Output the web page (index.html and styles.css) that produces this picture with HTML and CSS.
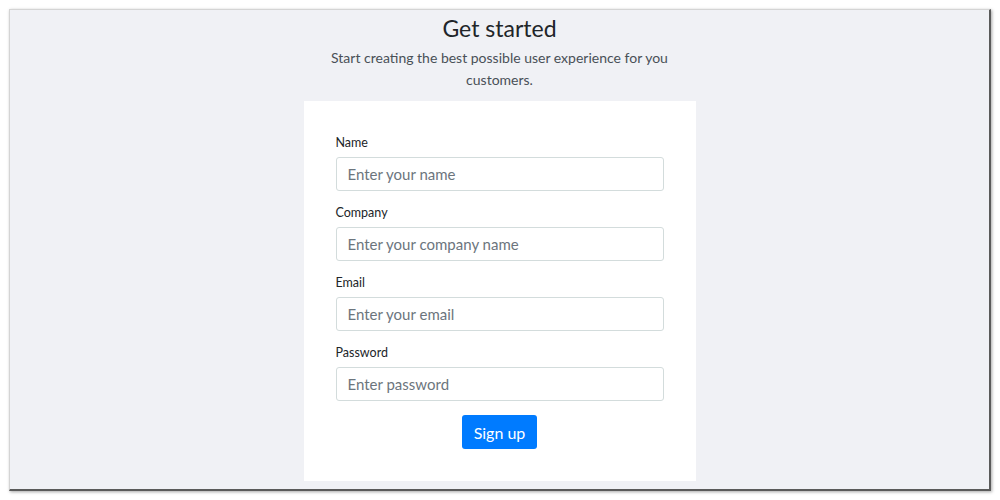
FILE: index.html
```html
<!DOCTYPE html>
<html lang="en">
<head>
    <meta charset="UTF-8">
    <meta name="viewport" content="width=device-width, initial-scale=1.0">
    <title>Get started</title>
    <link rel="stylesheet" href="styles.css">
</head>
<body>
    <div class="frame">
        <h1>Get started</h1>
        <p class="lead">Start creating the best possible user experience for you customers.</p>

        <form class="card" id="signupForm">
            <label for="name">Name</label>
            <input type="text" id="name" placeholder="Enter your name">

            <label for="company">Company</label>
            <input type="text" id="company" placeholder="Enter your company name">

            <label for="email">Email</label>
            <input type="email" id="email" placeholder="Enter your email">

            <label for="password">Password</label>
            <input type="password" id="password" placeholder="Enter password">

            <button type="submit">Sign up</button>
        </form>
    </div>
</body>
</html>
```

FILE: styles.css
```css
* {
    margin: 0;
    padding: 0;
    box-sizing: border-box;
}

body {
    background-color: #fff;
    font-family: Lato, "Noto Sans", sans-serif;
    padding: 9px;
}

.frame {
    height: 482px;
    background-color: #f0f1f5;
    border-top: 1px solid #d4d4d4;
    border-left: 1px solid #d4d4d4;
    border-right: 2px solid #5a5a5a;
    border-bottom: 2px solid #5a5a5a;
    box-shadow: 1px 1px 3px rgba(0, 0, 0, 0.35);
    display: flex;
    flex-direction: column;
    align-items: center;
    padding-top: 3px;
    overflow: hidden;
}

h1 {
    font-size: 23px;
    font-weight: 400;
    line-height: 30px;
    color: #212529;
    margin-bottom: 4px;
}

.lead {
    max-width: 360px;
    font-size: 14px;
    line-height: 22px;
    color: #495057;
    text-align: center;
    margin-bottom: 10px;
}

.card {
    width: 392px;
    background-color: #fff;
    padding: 34px 32px 32px;
    display: flex;
    flex-direction: column;
}

label {
    font-size: 12.5px;
    line-height: 16px;
    color: #212529;
    margin-bottom: 6px;
}

input {
    height: 34px;
    padding: 0 11px;
    font-family: inherit;
    font-size: 15px;
    color: #495057;
    border: 1px solid #d3dcdc;
    border-radius: 3px;
    margin-bottom: 14px;
}

input::placeholder {
    color: #6c757d;
}

button {
    align-self: center;
    height: 34px;
    padding: 0 12px;
    font-family: inherit;
    font-size: 16px;
    color: #fff;
    background-color: #007bff;
    border: none;
    border-radius: 3px;
    cursor: pointer;
}
```
